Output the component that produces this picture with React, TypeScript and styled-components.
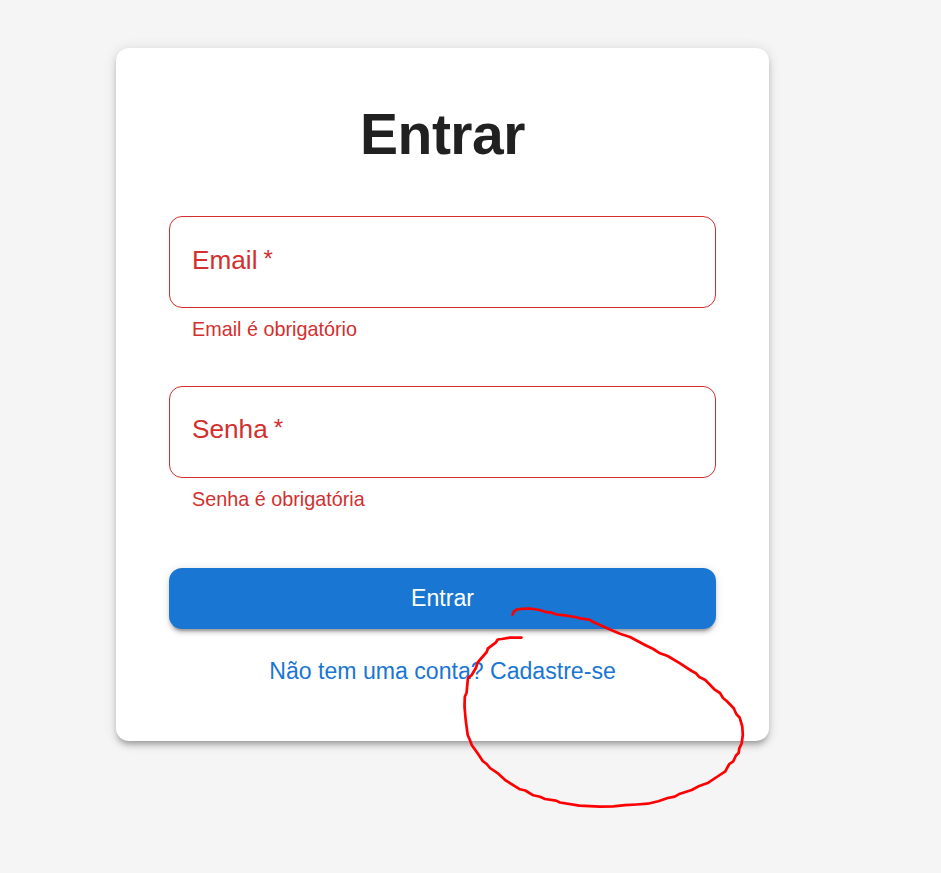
import React from 'react';
import styled, { createGlobalStyle } from 'styled-components';

const GlobalStyle = createGlobalStyle`
  * { box-sizing: border-box; }
  body {
    margin: 0;
    background: #f5f5f5;
    font-family: 'Liberation Sans', Arial, sans-serif;
  }
`;

const Page = styled.main`
  position: relative;
  height: 873px;
  padding: 48px 0 0 116px;
  overflow: hidden;
`;

const Card = styled.form`
  display: flex;
  flex-direction: column;
  width: 653px;
  height: 693px;
  padding: 53px 53px 40px;
  border-radius: 13px;
  background: #fff;
  box-shadow:
    0 5px 5px -3.3px rgba(0, 0, 0, 0.2),
    0 5px 6.6px rgba(0, 0, 0, 0.14),
    0 1.65px 13.2px rgba(0, 0, 0, 0.12);
`;

const Title = styled.h1`
  margin: 0 0 49px;
  color: #212121;
  font-size: 57px;
  letter-spacing: -0.5px;
  line-height: 66px;
  text-align: center;
`;

const Field = styled.div`
  flex: none;
  height: 170px;
`;

const Outline = styled.div<{ $lift: number }>`
  display: flex;
  align-items: center;
  height: 92px;
  padding: 0 22px ${(p) => p.$lift}px;
  border: 1px solid #d32f2f;
  border-radius: 13px;
`;

const Label = styled.label`
  color: #d32f2f;
  font-size: 26.2px;
  line-height: 38px;
`;

const Asterisk = styled.span`
  margin-left: 6px;
  font-size: 24px;
  line-height: 1;
  vertical-align: 2px;
`;

const HelperText = styled.p`
  margin: 5px 23px 0;
  color: #d32f2f;
  font-size: 19.8px;
  line-height: 33px;
`;

const SubmitButton = styled.button`
  flex: none;
  height: 61px;
  margin-top: 12px;
  padding: 0 0 1px;
  border: 0;
  border-radius: 13px;
  background: #1976d2;
  color: #fff;
  font: 23.1px/40px 'Liberation Sans', Arial, sans-serif;
  box-shadow:
    0 5px 1.65px -3.3px rgba(0, 0, 0, 0.2),
    0 3.3px 3.3px rgba(0, 0, 0, 0.14),
    0 1.65px 8.25px rgba(0, 0, 0, 0.12);
`;

const SignUpLink = styled.a`
  align-self: center;
  margin-top: 22px;
  color: #1976d2;
  font-size: 23.1px;
  line-height: 40px;
  text-decoration: none;
  white-space: nowrap;
`;

const Scribble = styled.svg`
  position: absolute;
  inset: 0;
  pointer-events: none;
`;

const STROKE =
  'M512.6 614.5L514 611.3L517 609.5L521.7 608.8L530 608.5L539.5 610L546.7 612.2L551.7 612.7L556.7 614.5L565 615.3L575 617L581.7 618.7L589.3 619.6L593.3 622L600 625L610 629.5L620 633.7L630 637L645 645L653.3 649L660 653.3L667.7 656L680 663.3L691.7 671L696 673.3L699.3 677L705.3 680L714.3 689.3L720 693L723 698L726.7 701L733.7 708.3L736.3 714L739.7 717.7L742.3 726.7L742.8 735L741.7 743.3L739.3 748.3L738.7 752.7L736 755.5L733.3 761.3L729.3 764L725.3 771.3L718.3 776L708.3 782.7L699.3 785.9L691.7 790L680 793.7L674.7 796.7L667.7 798L658.3 801.3L647.7 803.7L636.7 804.5L625 805.2L613.3 806.3L600 806.7L579.3 805.7L560 802.5L556 800.6L545 799L540 796.7L533.3 795.3L525.3 790.5L520 789.3L506 780.7L498.3 773.7L490 768L486.7 764L482.7 761L478.3 754.3L471.7 745L470 740.3L467.7 735L465.7 720L464.5 706.7L464.8 696.7L466.6 692.7L467.9 678.3L471.7 675L476 667.7L477.7 662.3L486.7 652L488 648.3L496 642.3L497.7 639.5L501.7 639L510 637.6L521.5 637.6';

type TextFieldProps = { label: string; error: string; lift: number };

const TextField = ({ label, error, lift }: TextFieldProps) => (
  <Field>
    <Outline $lift={lift}>
      <Label>
        {label}
        <Asterisk>*</Asterisk>
      </Label>
    </Outline>
    <HelperText>{error}</HelperText>
  </Field>
);

export default function App() {
  return (
    <>
      <GlobalStyle />
      <Page>
        <Card>
          <Title>Entrar</Title>
          <TextField label="Email" error="Email é obrigatório" lift={4} />
          <TextField label="Senha" error="Senha é obrigatória" lift={6} />
          <SubmitButton type="button">Entrar</SubmitButton>
          <SignUpLink href="#">Não tem uma conta? Cadastre-se</SignUpLink>
        </Card>
        <Scribble width="941" height="873" viewBox="0 0 941 873" fill="none">
          <path d={STROKE} stroke="#ff0000" strokeWidth="2.7" strokeLinecap="round" strokeLinejoin="round" />
        </Scribble>
      </Page>
    </>
  );
}
